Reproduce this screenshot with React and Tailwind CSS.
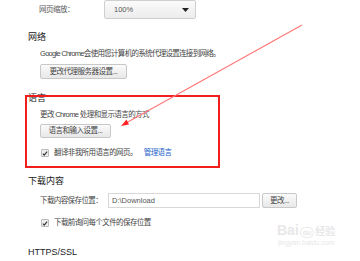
import React from "react";

const font = { fontFamily: '"Liberation Sans", "Noto Sans CJK SC", sans-serif' };

function Btn({ children, className = "" }) {
  return (
    <div
      className={`flex items-center justify-center whitespace-nowrap rounded-[2px] border border-[#c8c8c8] bg-gradient-to-b from-[#fafafa] to-[#e8e8e8] text-[7.5px] leading-none tracking-[-0.5px] text-[#444] ${className}`}
    >
      {children}
    </div>
  );
}

function Check({ label, children }) {
  return (
    <div className="flex h-[12px] items-center whitespace-nowrap pl-[1px]">
      <div className="flex h-[8px] w-[8px] items-center justify-center rounded-[1px] border border-[#bbb] bg-[#eee]">
        <svg width="7" height="7" viewBox="0 0 8 8">
          <path d="M1.2 4.2 L3 6.2 L6.8 1.4" fill="none" stroke="#333" strokeWidth="1.5" />
        </svg>
      </div>
      <span className="ml-[5px] text-[7.5px] leading-[12px] tracking-[-0.6px] text-[#444]">{label}</span>
      {children}
    </div>
  );
}

export default function App() {
  return (
    <div className="relative h-[261px] w-[360px] overflow-hidden whitespace-nowrap bg-white" style={font}>
      <div className="pl-[28px]">
        {/* zoom row */}
        <div className="flex h-[19px] items-center pl-[11px]">
          <span className="w-[65px] text-[7.5px] leading-[12px] tracking-[-0.5px] text-[#555]">网页缩放：</span>
          <div className="flex h-[19px] w-[92px] items-center justify-between rounded-[2px] border border-[#cfcfcf] bg-gradient-to-b from-[#fbfbfb] to-[#ececec] pl-[9px] pr-[6px]">
            <span className="text-[7.5px] text-[#555]">100%</span>
            <svg width="7" height="4" viewBox="0 0 7 4">
              <path d="M0 0 H7 L3.5 4 Z" fill="#222" />
            </svg>
          </div>
        </div>

        {/* network */}
        <div className="mt-[11px] text-[9px] leading-[14px] text-[#222]">网络</div>
        <div className="ml-[12px] mt-[4px]">
          <div className="text-[7.5px] leading-[12px] tracking-[-0.7px] text-[#444]">
            Google Chrome会使用您计算机的系统代理设置连接到网络。
          </div>
          <Btn className="mt-[4px] h-[15px] w-[87px]">更改代理服务器设置...</Btn>
        </div>

        {/* language */}
        <div className="mt-[12px] text-[9px] leading-[14px] text-[#222]">语言</div>
        <div className="ml-[12px] mt-[4px]">
          <div className="text-[7.5px] leading-[12px] tracking-[-0.6px] text-[#444]">更改 Chrome 处理和显示语言的方式</div>
          <Btn className="mt-[3px] h-[14px] w-[71px]">语言和输入设置...</Btn>
          <div className="mt-[9px]">
            <Check label="翻译非我所用语言的网页。">
              <span className="ml-[7px] text-[7.5px] leading-[12px] tracking-[-0.6px] text-[#1a5fc8]">管理语言</span>
            </Check>
          </div>
        </div>

        {/* downloads */}
        <div className="mt-[15px] text-[9px] leading-[14px] text-[#222]">下载内容</div>
        <div className="ml-[12px] mt-[5px]">
          <div className="flex h-[15px] items-center">
            <span className="w-[68px] text-[7.5px] leading-[12px] tracking-[-0.6px] text-[#444]">下载内容保存位置：</span>
            <div className="flex h-[15px] w-[152px] items-center border border-[#d8d8d8] bg-white pl-[3px] text-[7.5px] text-[#555]">
              D:\Download
            </div>
            <Btn className="ml-[2px] h-[15px] w-[35px]">更改...</Btn>
          </div>
          <div className="mt-[9px]">
            <Check label="下载前询问每个文件的保存位置" />
          </div>
        </div>

        <div className="mt-[16px] text-[9px] leading-[14px] text-[#222]">HTTPS/SSL</div>
      </div>

      {/* annotation: red box */}
      <div className="absolute left-[25px] top-[95px] h-[73px] w-[195px] border-2 border-[#f21d1d]" />

      {/* annotation: arrow */}
      <svg className="absolute left-0 top-0" width="360" height="261" viewBox="0 0 360 261">
        <line x1="302" y1="25" x2="126" y2="123" stroke="#f77" strokeWidth="1.2" />
        <path d="M121 126 L126.5 119.5 L129 124.5 Z" fill="#f22" />
      </svg>

      {/* watermark */}
      <div className="absolute left-[277px] top-[222px] flex flex-col items-center text-[#e8e8e8]">
        <div className="flex items-end text-[14px] font-bold leading-[16px]">
          <span>Bai</span>
          <span className="mx-[1px] rounded-full border border-[#e8e8e8] px-[2px] text-[7px] leading-[9px]">du</span>
          <span className="text-[10px] leading-[13px]">经验</span>
        </div>
        <div className="text-[7px] leading-[10px]">jingyan.baidu.com</div>
      </div>
    </div>
  );
}
